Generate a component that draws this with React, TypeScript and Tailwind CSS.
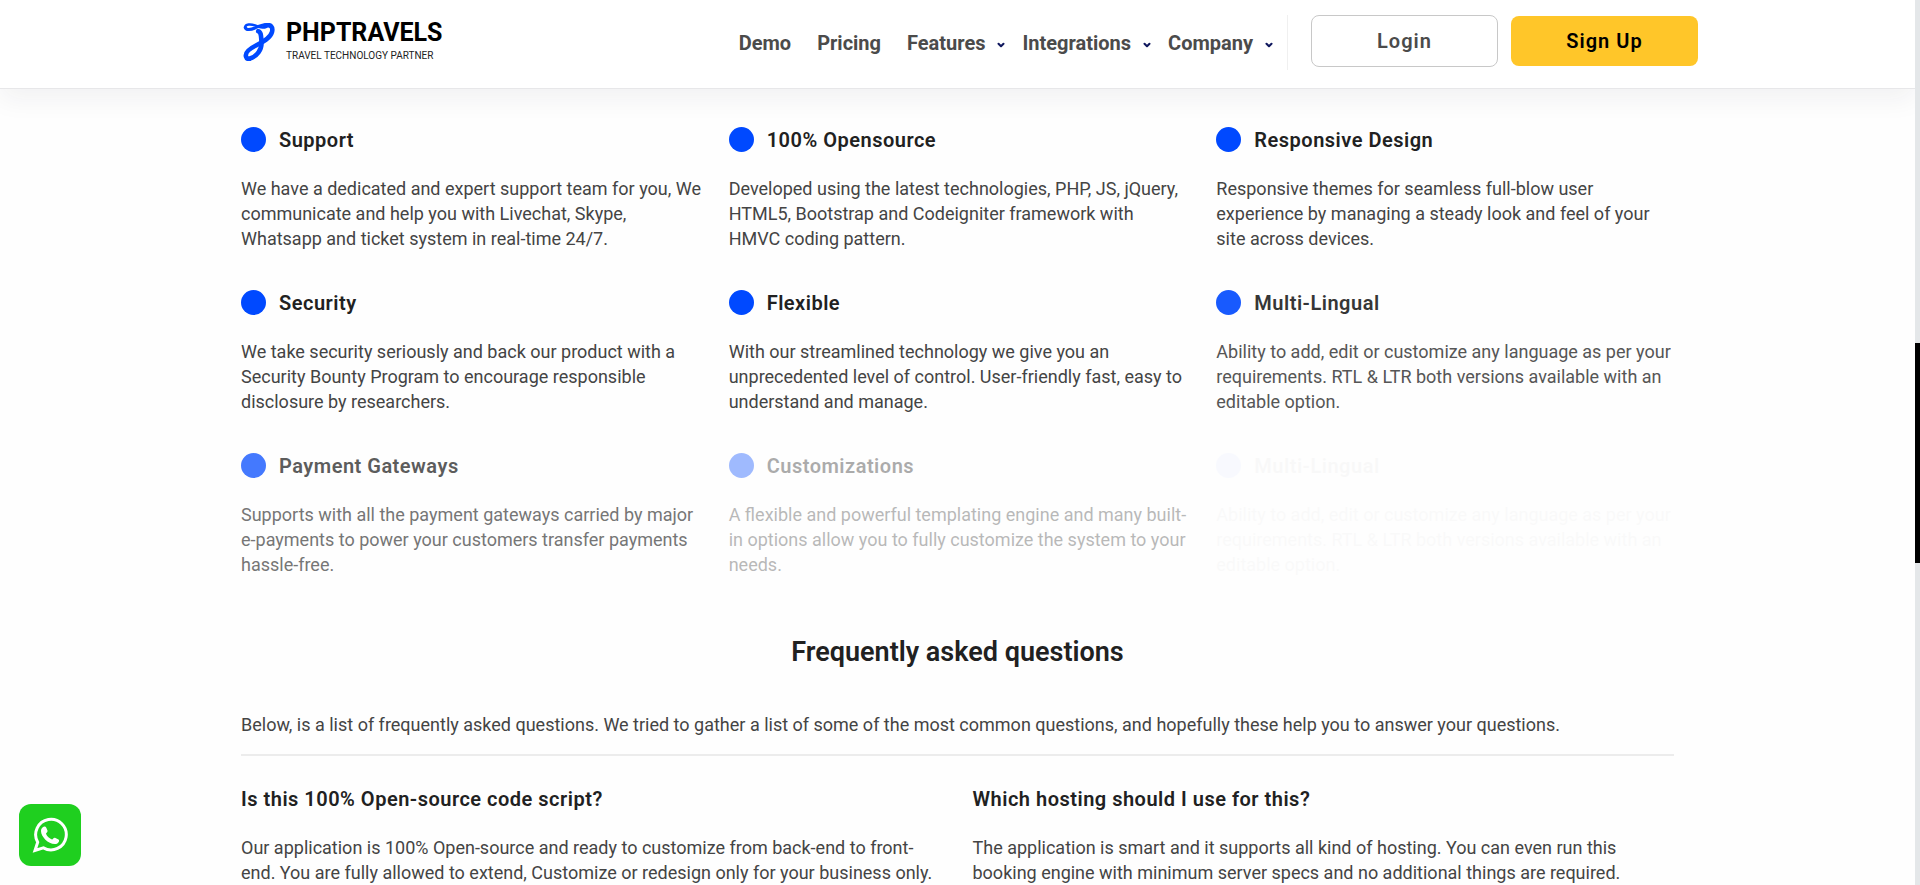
import { ChevronDown } from "lucide-react";

const features = [
  { title: "Support", text: "We have a dedicated and expert support team for you, We communicate and help you with Livechat, Skype, Whatsapp and ticket system in real-time 24/7.", fade: "opacity-100" },
  { title: "100% Opensource", text: "Developed using the latest technologies, PHP, JS, jQuery, HTML5, Bootstrap and Codeigniter framework with HMVC\u00a0coding pattern.", fade: "opacity-100" },
  { title: "Responsive Design", text: "Responsive themes for seamless full-blow user experience by managing a steady look and feel of your site across devices.", fade: "opacity-100" },
  { title: "Security", text: "We take security seriously and back our product with a Security Bounty Program to encourage responsible disclosure by researchers.", fade: "opacity-100" },
  { title: "Flexible", text: "With our streamlined technology we give you an unprecedented level of control. User-friendly fast, easy to understand and manage.", fade: "opacity-100" },
  { title: "Multi-Lingual", text: "Ability to add, edit or customize any language as per your requirements. RTL & LTR both versions available with an editable option.", fade: "opacity-90" },
  { title: "Payment Gateways", text: "Supports with all the payment gateways carried by major e-payments to power your customers transfer payments hassle-free.", fade: "opacity-[0.73]" },
  { title: "Customizations", text: "A flexible and powerful templating engine and many built-in options allow you to fully customize the system to your needs.", fade: "opacity-[0.37]" },
  { title: "Multi-Lingual", text: "Ability to add, edit or customize any language as per your requirements. RTL & LTR both versions available with an editable option.", fade: "opacity-[0.02]" },
];

const faqs = [
  { question: "Is this 100% Open-source code script?", answer: "Our application is 100% Open-source and ready to customize from back-end to front-end. You are fully allowed to extend, Customize or redesign only for your business only." },
  { question: "Which hosting should I use for this?", answer: "The application is smart and it supports all kind of hosting. You can even run this booking engine with minimum server specs and no additional things are required." },
];

const menus = ["Features", "Integrations", "Company"];

function Logo() {
  return (
    <a href="#" className="flex items-center gap-[11px] text-black">
      <svg viewBox="0 0 32 38" className="h-[38px] w-8" aria-hidden="true">
        <g fill="none" stroke="#0049ff" strokeLinecap="round">
          <path d="M2.200 4.500C3 7.500 8 6.600 12 5C17 2.600 22 1 26 1.800" strokeWidth="3" />
          <path d="M2.200 4.500C2 0.800 8 1 12 2.400C17 4.500 19 5.200 23 4" strokeWidth="2.400" />
          <path d="M22 2.800C28 0.800 30.200 4 29 9C27.500 15 20 19 13 22.500C5 26.500 2 30 3 33.500C3.400 35 4.500 36 6 36.200" strokeWidth="4.600" />
          <path d="M15.200 8.200C18.500 9 18 14 18.500 18.500C19 27 14 33.500 6.300 35.700" strokeWidth="4.600" />
        </g>
      </svg>
      <span className="flex flex-col">
        <span className="text-[25px] leading-[26px] font-bold">PHPTRAVELS</span>
        <span className="pt-0.5 text-[10px] leading-4 text-[#222]">TRAVEL TECHNOLOGY PARTNER</span>
      </span>
    </a>
  );
}

function Header() {
  return (
    <header className="border-b border-[#e7e7e9] bg-white shadow-[0_10px_25px_0_rgba(31,34,51,0.06)]">
      <div className="mx-auto flex h-[88px] max-w-[1481px] items-start justify-between pl-[26px]">
        <div className="pt-5">
          <Logo />
        </div>
        <div className="flex items-start pt-[15px]">
          <nav className="flex h-14 items-center pr-[13px] text-xl font-bold text-[#4b4b4b]">
            <a href="#" className="mr-[26px]">Demo</a>
            <a href="#" className="mr-[26px]">Pricing</a>
            {menus.map((name) => (
              <button key={name} type="button" className="mr-4 flex items-center gap-[11px] last:mr-0">
                {name}
                <ChevronDown className="mt-1 size-2.5 text-[#10185e]" strokeWidth={5} />
              </button>
            ))}
          </nav>
          <span className="h-[55px] w-px bg-[#f0f0f0]" />
          <div className="ml-[23px] flex items-center gap-[13px]">
            <button type="button" className="h-[52px] w-[187px] rounded-lg border border-[#c8c8c8] text-xl font-semibold tracking-wider text-[#4b4b4b]">Login</button>
            <button type="button" className="h-[50px] w-[187px] rounded-lg bg-[#ffc629] text-xl font-semibold tracking-wider text-black">Sign Up</button>
          </div>
        </div>
      </div>
    </header>
  );
}

export default function App() {
  return (
    <div className="min-h-screen bg-[#fefefe] pr-[5px] font-['Roboto',sans-serif] text-[#212121]">
      <Header />
      <main className="mx-auto max-w-[1463px] px-[15px]">
        <section className="grid grid-cols-3 gap-x-[30px] gap-y-[39px] pt-[38px]">
          {features.map(({ title, text, fade }, index) => (
            <article key={index} className={fade}>
              <h3 className="flex items-start gap-[13px] text-xl leading-[27px] font-semibold tracking-wide">
                <span className="size-[25px] rounded-full bg-[#0049ff]" />
                {title}
              </h3>
              <p className="mt-[22px] -mr-2 text-lg leading-[25px] text-[#444]">{text}</p>
            </article>
          ))}
        </section>
        <section>
          <h2 className="mt-[59px] text-center text-[27px] leading-8 font-semibold">Frequently asked questions</h2>
          <p className="mt-[44px] text-lg leading-[25px] text-[#444]">
            Below, is a list of frequently asked questions. We tried to gather a list of some of the most common questions, and hopefully these help you to answer your questions.
          </p>
          <hr className="mt-[17px] border-t-2 border-[#ececec]" />
          <div className="grid grid-cols-2 gap-x-[30px] pt-[30px]">
            {faqs.map(({ question, answer }) => (
              <article key={question}>
                <h3 className="text-xl leading-[27px] font-semibold tracking-wide">{question}</h3>
                <p className="mt-[22px] text-lg leading-[25px] text-[#444]">{answer}</p>
              </article>
            ))}
          </div>
        </section>
      </main>
      <a href="#" aria-label="WhatsApp" className="fixed bottom-[19px] left-[19px] flex size-[62px] items-center justify-center rounded-xl bg-[#1fcf1f]">
        <svg viewBox="0 0 36 36" className="size-9" aria-hidden="true">
          <path d="M3 33.500L5.700 25.200A15.300 15.300 0 1 1 11.400 30.900Z" fill="none" stroke="#fff" strokeWidth="3" />
          <path d="M10.500 10.500C12 9 13.500 9 14.300 10.700L15.500 13.500C16 15 14 16 14 16.700C15 19.500 17.500 21.500 20 22.500C21 22.500 21.500 20.500 23 20.800L26.500 22.500C28 23.500 26.500 26.500 24 27C17 28 9 20 9 14C9 12.500 9.500 11.500 10.500 10.500Z" fill="#fff" />
        </svg>
      </a>
      <div aria-hidden="true" className="fixed inset-y-0 right-0 w-[5px] bg-[#e4e7e9]">
        <div className="mt-[343px] h-[220px] bg-black" />
      </div>
    </div>
  );
}
